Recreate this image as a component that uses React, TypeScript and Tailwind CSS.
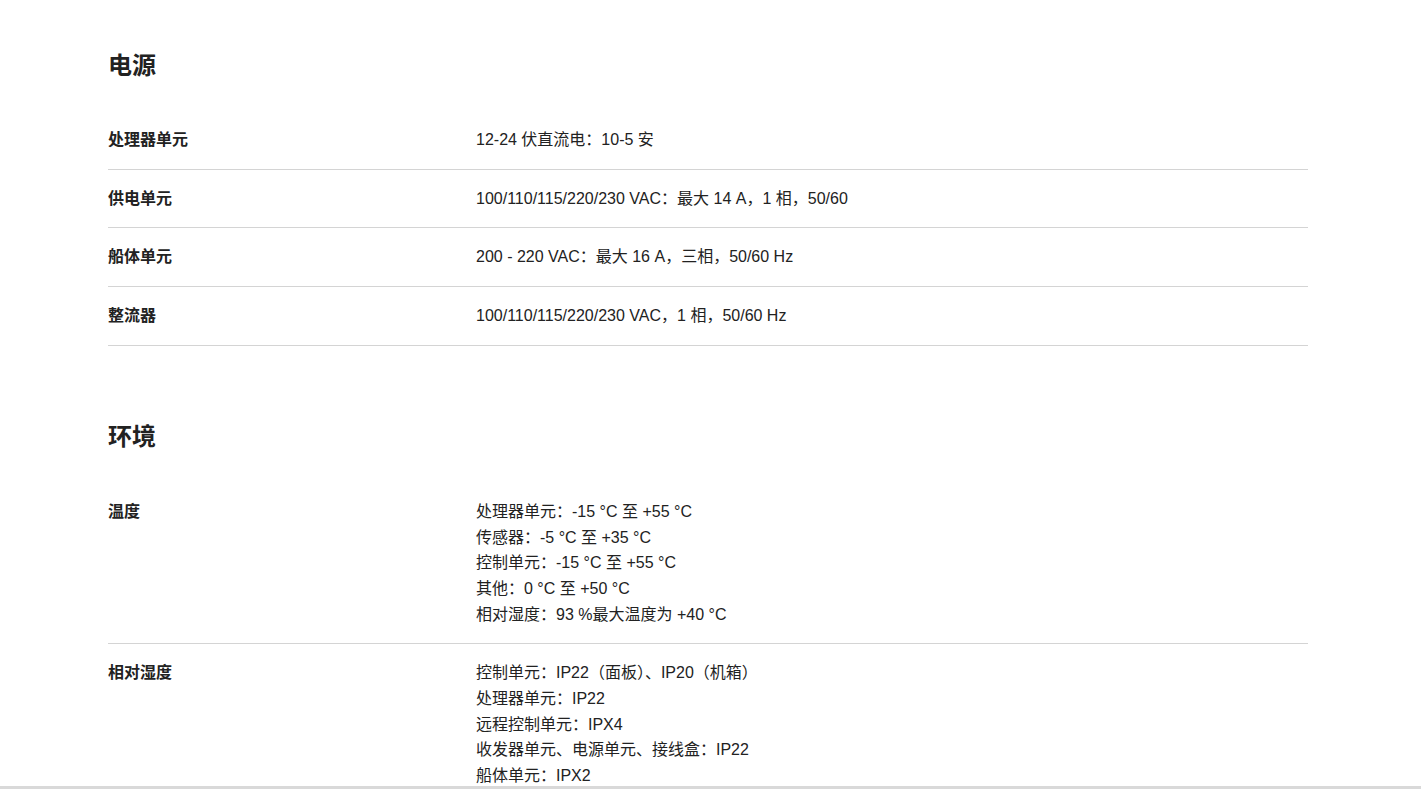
const power = [
  { label: "处理器单元", lines: ["12-24 伏直流电：10-5 安"] },
  { label: "供电单元", lines: ["100/110/115/220/230 VAC：最大 14 A，1 相，50/60"] },
  { label: "船体单元", lines: ["200 - 220 VAC：最大 16 A，三相，50/60 Hz"] },
  { label: "整流器", lines: ["100/110/115/220/230 VAC，1 相，50/60 Hz"] },
];

const environment = [
  {
    label: "温度",
    lines: [
      "处理器单元：-15 °C 至 +55 °C",
      "传感器：-5 °C 至 +35 °C",
      "控制单元：-15 °C 至 +55 °C",
      "其他：0 °C 至 +50 °C",
      "相对湿度：93 %最大温度为 +40 °C",
    ],
  },
  {
    label: "相对湿度",
    lines: [
      "控制单元：IP22（面板）、IP20（机箱）",
      "处理器单元：IP22",
      "远程控制单元：IPX4",
      "收发器单元、电源单元、接线盒：IP22",
      "船体单元：IPX2",
    ],
  },
];

type Row = { label: string; lines: string[] };

const SpecTable = ({ rows }: { rows: Row[] }) => (
  <div>
    {rows.map((row) => (
      <div
        key={row.label}
        className="grid grid-cols-[368px_1fr] border-b border-[#d4d4d4] py-4 leading-[25.7px]"
      >
        <div className="font-bold">{row.label}</div>
        <div>
          {row.lines.map((line) => (
            <div key={line}>{line}</div>
          ))}
        </div>
      </div>
    ))}
  </div>
);

export default function App() {
  return (
    <div
      className="flex h-[789px] flex-col overflow-hidden bg-white text-[16px] text-[#222]"
      style={{ fontFamily: '"Liberation Sans", "Noto Sans CJK SC", sans-serif' }}
    >
      <div className="flex-1 overflow-hidden">
        <div className="ml-[108px] w-[1200px] pt-[50px]">
          <section>
            <h2 className="mb-[29px] text-[24px] font-bold leading-[32px]">电源</h2>
            <SpecTable rows={power} />
          </section>
          <section className="mt-[75px]">
            <h2 className="mb-[30px] text-[24px] font-bold leading-[32px]">环境</h2>
            <SpecTable rows={environment} />
          </section>
        </div>
      </div>
      <div className="h-[3px] shrink-0 bg-[#d9d9d9]" />
    </div>
  );
}
